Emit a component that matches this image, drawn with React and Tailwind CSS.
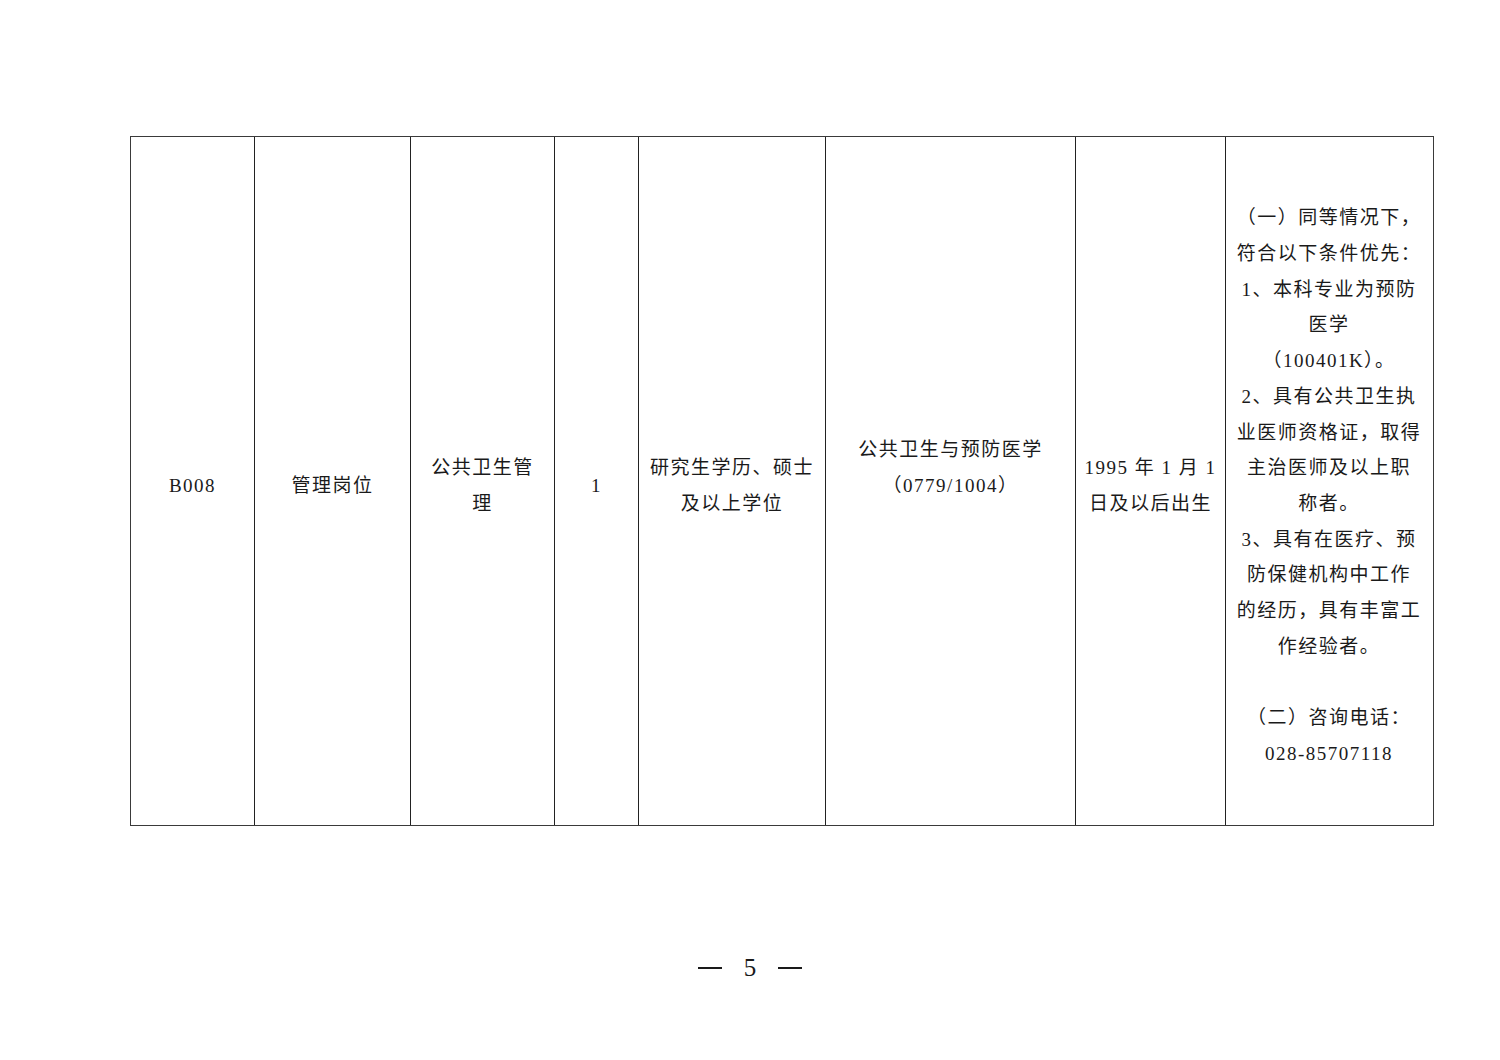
const cellText =
  "text-[19px] leading-[35.7px] tracking-[1.5px] text-[#1a1a1a] text-center";

const remarkLines = [
  "（一）同等情况下，",
  "符合以下条件优先：",
  "1、本科专业为预防",
  "医学",
  "（100401K）。",
  "2、具有公共卫生执",
  "业医师资格证，取得",
  "主治医师及以上职",
  "称者。",
  "3、具有在医疗、预",
  "防保健机构中工作",
  "的经历，具有丰富工",
  "作经验者。",
  "",
  "（二）咨询电话：",
  "028-85707118",
];

const Cell = ({ lines, last }) => (
  <div
    className={
      "flex flex-col items-center justify-center pt-[10px] " +
      (last ? "" : "border-r border-[#222]")
    }
  >
    {lines.map((line, key) => (
      <div key={key} className={cellText + " whitespace-nowrap"}>
        {line === "" ? "\u00a0" : line}
      </div>
    ))}
  </div>
);

const App = () => {
  return (
    <div className="w-[1500px] h-[1060px] bg-white font-['Liberation_Serif','Noto_Sans_CJK_SC',serif] pt-[136px]">
      <div className="ml-[130px] w-[1304px] h-[690px] border-[1.5px] border-[#3a3a3a] grid grid-cols-[124px_156px_144px_84px_187px_250px_150px_206px]">
        <Cell lines={["B008"]} />
        <Cell lines={["管理岗位"]} />
        <Cell lines={["公共卫生管", "理"]} />
        <Cell lines={["1"]} />
        <Cell lines={["研究生学历、硕士", "及以上学位"]} />
        <Cell lines={["公共卫生与预防医学", "（0779/1004）", "\u00a0"]} />
        <Cell lines={["1995 年 1 月 1", "日及以后出生"]} />
        <Cell lines={remarkLines} last />
      </div>
      <div className="mt-[126px] flex justify-center items-center gap-[22px] text-[25px] leading-[32px] text-[#1a1a1a]">
        <span className="inline-block w-[24px] h-[1.5px] bg-[#1a1a1a]" />
        <span>5</span>
        <span className="inline-block w-[24px] h-[1.5px] bg-[#1a1a1a]" />
      </div>
    </div>
  );
};

export default App;
